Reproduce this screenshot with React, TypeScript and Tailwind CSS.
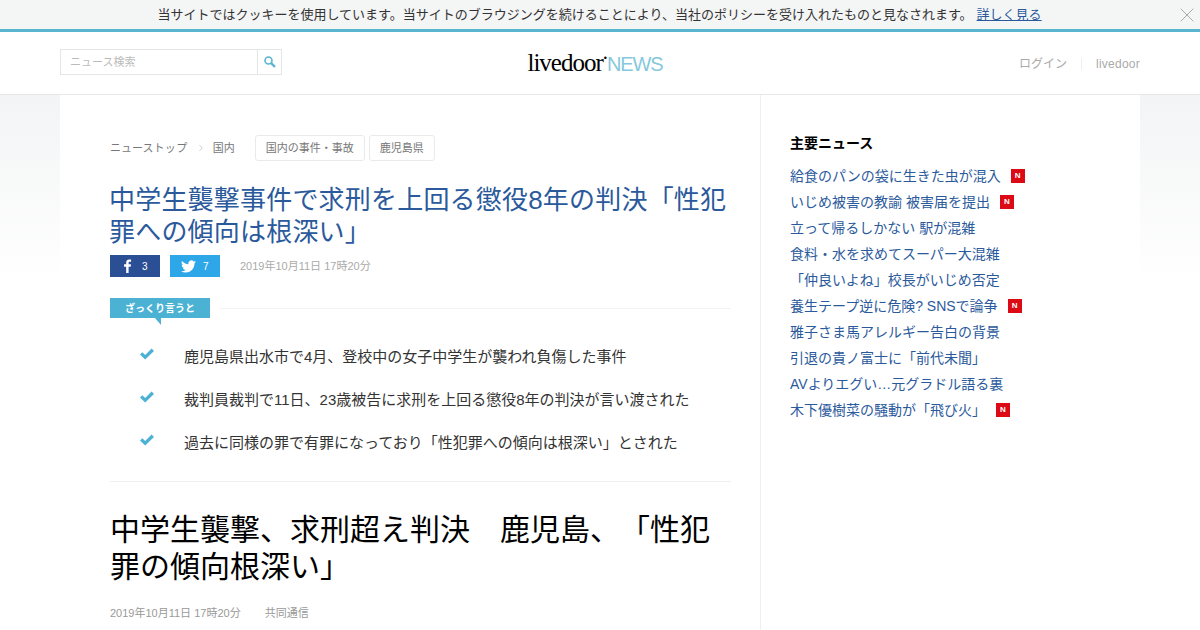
import { X, ChevronRight } from 'lucide-react';

const news = [
  { title: '給食のパンの袋に生きた虫が混入', isNew: true },
  { title: 'いじめ被害の教諭 被害届を提出', isNew: true },
  { title: '立って帰るしかない 駅が混雑' },
  { title: '食料・水を求めてスーパー大混雑' },
  { title: '「仲良いよね」校長がいじめ否定' },
  { title: '養生テープ逆に危険? SNSで論争', isNew: true },
  { title: '雅子さま馬アレルギー告白の背景' },
  { title: '引退の貴ノ富士に「前代未聞」' },
  { title: 'AVよりエグい…元グラドル語る裏' },
  { title: '木下優樹菜の騒動が「飛び火」', isNew: true },
];

const points = [
  '鹿児島県出水市で4月、登校中の女子中学生が襲われ負傷した事件',
  '裁判員裁判で11日、23歳被告に求刑を上回る懲役8年の判決が言い渡された',
  '過去に同様の罪で有罪になっており「性犯罪への傾向は根深い」とされた',
];

export default function App() {
  return (
    <div className="w-[1200px] h-[630px] overflow-hidden bg-white font-['Liberation_Sans','Noto_Sans_CJK_JP',sans-serif] [text-spacing-trim:space-all]">
      {/* cookie bar */}
      <div className="relative h-[32px] bg-[#f4f5f5] border-b-[3px] border-[#5ab6cf] flex items-center justify-center text-[13px] text-[#333] pr-[1px]">
        <span>当サイトではクッキーを使用しています。当サイトのブラウジングを続けることにより、当社のポリシーを受け入れたものと見なされます。</span>
        <a className="ml-[4px] text-[#2b5a9c] underline">詳しく見る</a>
        <X className="absolute right-[1px] top-[3px] w-[24px] h-[24px] text-[#aaa]" strokeWidth={1} />
      </div>

      {/* header */}
      <header className="h-[63px] bg-white border-b border-[#e8e8e8] px-[60px] grid grid-cols-[1fr_auto_1fr] items-center">
        <div className="flex w-[222px] h-[26px] mt-[-2px] border border-[#e3e6e6]">
          <div className="flex-1 pl-[9px] text-[11px] leading-[25px] text-[#bbb]">ニュース検索</div>
          <div className="w-[24px] border-l border-[#e3e6e6] flex items-center justify-center">
            <svg viewBox="0 0 12 12" className="w-[12px] h-[12px] fill-none stroke-[#5ab6cf]">
              <circle cx="4.500" cy="4.500" r="3.500" strokeWidth="1.600" />
              <path d="M7.200 7.200 11 11" strokeWidth="2.400" />
            </svg>
          </div>
        </div>
        <div className="flex items-baseline mr-[10px] mt-[-1px]">
          <span className="font-['Liberation_Serif',serif] text-[25px] leading-none text-black tracking-[-1px]">livedoor</span>
          <span className="text-[9px] leading-none text-black relative top-[-10px] ml-[1px]">•</span>
          <span className="text-[20px] leading-none text-[#86c8dc] tracking-[-1.1px]">NEWS</span>
        </div>
        <div className="flex items-center justify-end pt-[1px] text-[12px] text-[#aaa]">
          <span>ログイン</span>
          <span className="w-px h-[12px] bg-[#eee] mx-[14px]" />
          <span className="tracking-[0.25px]">livedoor</span>
        </div>
      </header>

      {/* body */}
      <div className="h-[535px] bg-gradient-to-b from-[#f3f4f5] to-white to-[35%] px-[60px]">
        <div className="h-full bg-white flex">
          <main className="w-[701px] border-r border-[#f0f0f0] pl-[50px] pr-[29px] pt-[40px]">
            <div className="flex items-center h-[26px] text-[11px] text-[#777]">
              <span>ニュース<span className="tracking-[0.4px]">トップ</span></span>
              <ChevronRight className="w-[10px] h-[10px] ml-[8px] mr-[7px] text-[#999]" strokeWidth={1.2} />
              <span>国内</span>
              <span className="ml-[20px] h-[26px] px-[10px] border border-[#eaeaea] rounded-[3px] leading-[25px]">国内の事件・事故</span>
              <span className="ml-[4px] h-[26px] px-[10px] border border-[#eaeaea] rounded-[3px] leading-[25px]">鹿児島県</span>
            </div>

            <h1 className="mt-[23px] ml-[-1px] text-[26px] tracking-[0.2px] leading-[32px] font-normal text-[#2b5a9c]">
              中学生襲撃事件で求刑を上回る懲役8年の判決「性犯罪への傾向は根深い」
            </h1>

            <div className="mt-[7px] flex items-center">
              <div className="w-[50px] h-[22px] bg-[#2b4f94] flex items-center text-white text-[10px] pl-[13px]">
                <svg viewBox="0 0 10 18" className="w-[9px] h-[14px] fill-white"><path d="M6.4 18V10h2.7l.4-3.1H6.4V5c0-.9.3-1.5 1.6-1.5h1.6V.7C9.3.7 8.400.6 7.300.6 4.900.6 3.300 2 3.300 4.700v2.200H.6V10h2.700v8z" /></svg>
                <span className="ml-[10px]">3</span>
              </div>
              <div className="ml-[10px] w-[50px] h-[22px] bg-[#2ea7e8] flex items-center text-white text-[10px] pl-[11px]">
                <svg viewBox="0 0 24 24" className="w-[15px] h-[15px] fill-white"><path d="M23.950 4.570a10 10 0 0 1-2.820.770 4.960 4.960 0 0 0 2.160-2.720c-.950.550-2 .950-3.130 1.180a4.920 4.920 0 0 0-8.380 4.480C7.690 8.090 4.070 6.130 1.640 3.160a4.820 4.820 0 0 0-.670 2.480c0 1.710.870 3.210 2.190 4.100a4.900 4.900 0 0 1-2.230-.620v.060a4.920 4.920 0 0 0 3.950 4.830 4.990 4.990 0 0 1-2.210.080 4.940 4.940 0 0 0 4.600 3.420A9.870 9.870 0 0 1 0 19.540a14 14 0 0 0 7.560 2.210c9.050 0 14-7.500 14-13.980 0-.210 0-.420-.020-.630a9.940 9.940 0 0 0 2.460-2.550z" /></svg>
                <span className="ml-[7px]">7</span>
              </div>
              <span className="ml-[20px] text-[11px] text-[#aaa]">2019年10月11日 17時20分</span>
            </div>

            {/* summary */}
            <div className="relative mt-[21px] flex items-center">
              <div className="relative w-[100px] h-[20px] bg-[#4cb2d4] text-white text-[10px] font-bold flex items-center justify-center">
                ざっくり言うと
                <span className="absolute left-[45px] top-[20px] border-t-[7px] border-l-[6px] border-t-[#4cb2d4] border-l-transparent" />
              </div>
              <div className="flex-1 h-px bg-[#f3f3f3] ml-[10px]" />
            </div>
            <ul className="mt-[28px] pb-[6px] border-b border-[#f0f0f0]">
              {points.map((p) => (
                <li key={p} className="h-[43px] flex items-start pl-[30px]">
                  <svg viewBox="0 0 14 12" className="w-[14px] h-[12px] mt-[2px] fill-[#4cb2d4]">
                    <path d="M0 6.500 2.300 4.300 5.200 7 11.600 .6 14 2.900 5.200 11.600z" />
                  </svg>
                  <span className="ml-[30px] text-[15px] leading-[21px] text-[#333]">{p}</span>
                </li>
              ))}
            </ul>

            <h2 className="mt-[29px] text-[30px] leading-[37px] font-normal text-black">
              中学生襲撃、求刑超え判決　鹿児島、「性犯罪の傾向根深い」
            </h2>
            <div className="mt-[20px] flex text-[11px] text-[#999]">
              <span>2019年10月11日 17時20分</span>
              <span className="ml-[24px]">共同通信</span>
            </div>
          </main>

          <aside className="flex-1 pl-[29px] pt-[38px]">
            <h3 className="text-[14px] leading-[20px] font-bold text-black">主要ニュース</h3>
            <ul className="mt-[10px]">
              {news.map((n) => (
                <li key={n.title} className="h-[26px] flex items-start text-[14px] leading-[26px] text-[#2b5a9c]">
                  <span>{n.title}</span>
                  {n.isNew && (
                    <span className="ml-[10px] mt-[6px] w-[14px] h-[14px] bg-[#dc0a14] text-white text-[8px] leading-[14px] font-bold text-center">N</span>
                  )}
                </li>
              ))}
            </ul>
          </aside>
        </div>
      </div>
    </div>
  );
}
